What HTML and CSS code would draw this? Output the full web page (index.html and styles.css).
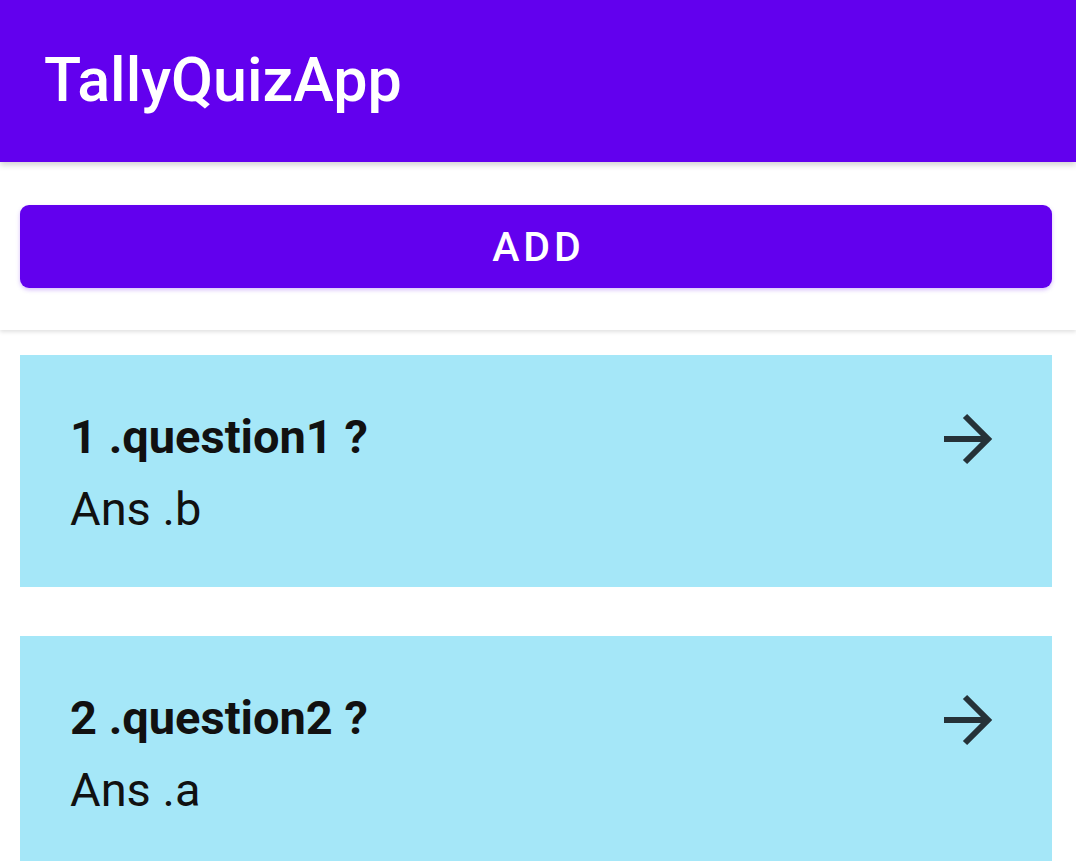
FILE: index.html
```html
<!DOCTYPE html>
<html>
<head>
<meta charset="utf-8">
<link rel="stylesheet" href="styles.css">
</head>
<body>
<header class="appbar"><span class="title">TallyQuizApp</span></header>
<section class="toolbar">
  <button class="add-btn">ADD</button>
</section>
<main class="list">
  <div class="card">
    <div class="card-text">
      <div class="question">1 .question1 ?</div>
      <div class="answer">Ans .b</div>
    </div>
    <svg class="arrow" width="56" height="56" viewBox="0 0 56 56"><path d="M4 27 H48 M25 4 L48 27 L25 50" fill="none" stroke="#263238" stroke-width="6" stroke-linecap="butt" stroke-linejoin="miter"/></svg>
  </div>
  <div class="card">
    <div class="card-text">
      <div class="question">2 .question2 ?</div>
      <div class="answer">Ans .a</div>
    </div>
    <svg class="arrow" width="56" height="56" viewBox="0 0 56 56"><path d="M4 27 H48 M25 4 L48 27 L25 50" fill="none" stroke="#263238" stroke-width="6" stroke-linecap="butt" stroke-linejoin="miter"/></svg>
  </div>
</main>
</body>
</html>
```
FILE: styles.css
```css
html, body {
  margin: 0;
  padding: 0;
  background: #ffffff;
  font-family: Roboto, "Noto Sans", sans-serif;
  overflow: hidden;
}
.appbar {
  height: 162px;
  background: #6200ee;
  display: flex;
  align-items: center;
  padding-left: 44px;
  box-shadow: 0 3px 6px rgba(0,0,0,0.18);
  position: relative;
  z-index: 2;
}
.title {
  color: #ffffff;
  font-size: 61px;
  font-weight: 500;
  margin-top: -2px;
}
.toolbar {
  height: 168px;
  padding: 43px 24px 0 20px;
  box-sizing: border-box;
  background: #ffffff;
  box-shadow: 0 2px 4px rgba(0,0,0,0.12);
  position: relative;
  z-index: 1;
}
.add-btn {
  display: block;
  width: 100%;
  height: 83px;
  border: none;
  border-radius: 9px;
  background: #6200ee;
  color: #ffffff;
  font-family: Roboto, sans-serif;
  font-size: 41px;
  font-weight: 500;
  letter-spacing: 4px;
  padding: 0 0 0 5px;
  box-shadow: 0 2px 4px rgba(98,0,238,0.25);
}
.list {
  padding: 25px 24px 0 20px;
  display: flex;
  flex-direction: column;
  gap: 49px;
}
.card {
  height: 232px;
  background: #a5e7f8;
  display: flex;
  align-items: flex-start;
  padding: 58px 56px 0 50px;
  box-sizing: border-box;
}
.card-text {
  flex: 1;
}
.question {
  font-size: 47px;
  font-weight: 700;
  color: #111111;
  line-height: 48px;
}
.answer {
  font-size: 47px;
  font-weight: 400;
  color: #111111;
  line-height: 48px;
  margin-top: 24px;
}
.arrow {
  margin-top: -1px;
}
```
